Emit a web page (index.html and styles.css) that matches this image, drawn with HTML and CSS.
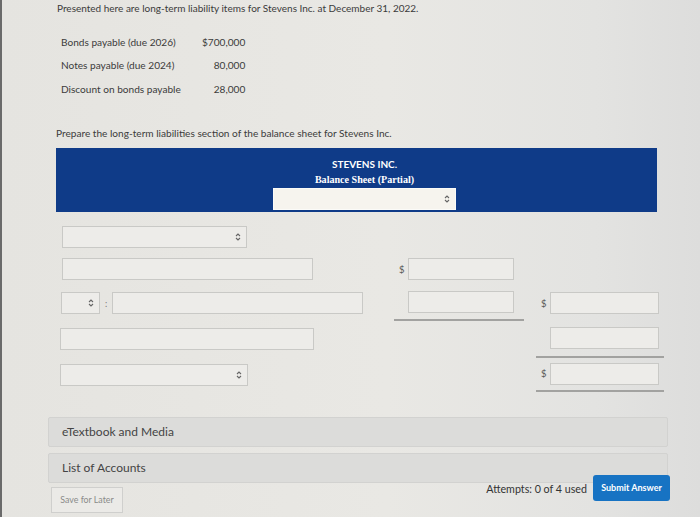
FILE: index.html
```html
<!DOCTYPE html>
<html>
<head>
<meta charset="utf-8">
<link rel="stylesheet" href="styles.css">
</head>
<body>
<div class="screen">
  <div class="content">
    <p class="intro">Presented here are long-term liability items for Stevens Inc. at December 31, 2022.</p>
    <table class="items">
      <tr><td class="lbl">Bonds payable (due 2026)</td><td class="val">$700,000</td></tr>
      <tr><td class="lbl">Notes payable (due 2024)</td><td class="val">80,000</td></tr>
      <tr><td class="lbl">Discount on bonds payable</td><td class="val">28,000</td></tr>
    </table>
    <p class="prompt">Prepare the long-term liabilities section of the balance sheet for Stevens Inc.</p>

    <div class="sheet-head">
      <div class="co">STEVENS INC.</div>
      <div class="title">Balance Sheet (Partial)</div>
      <div class="select wide-sel"><svg class="chev" viewBox="0 0 8 10"><path d="M2 4 L4 2 L6 4 M2 6 L4 8 L6 6"/></svg></div>
    </div>

    <div class="grid">
      <!-- row 1 -->
      <div class="ca"><div class="select sel-a"><svg class="chev" viewBox="0 0 8 10"><path d="M2 4 L4 2 L6 4 M2 6 L4 8 L6 6"/></svg></div></div>
      <div class="cb"></div>
      <div class="cc"></div>
      <!-- row 2 -->
      <div class="ca"><div class="input in-a"></div></div>
      <div class="cb"><span class="dol">$</span><div class="input in-b"></div></div>
      <div class="cc"></div>
      <!-- row 3 -->
      <div class="ca"><div class="select sel-s"><svg class="chev" viewBox="0 0 8 10"><path d="M2 4 L4 2 L6 4 M2 6 L4 8 L6 6"/></svg></div><span class="colon">:</span><div class="input in-c"></div></div>
      <div class="cb ul"><span class="dol"></span><div class="input in-b"></div></div>
      <div class="cc"><span class="dol">$</span><div class="input in-d"></div></div>
      <!-- row 4 -->
      <div class="ca"><div class="input in-e"></div></div>
      <div class="cb"></div>
      <div class="cc ul"><span class="dol"></span><div class="input in-d"></div></div>
      <!-- row 5 -->
      <div class="ca"><div class="select sel-b"><svg class="chev" viewBox="0 0 8 10"><path d="M2 4 L4 2 L6 4 M2 6 L4 8 L6 6"/></svg></div></div>
      <div class="cb"></div>
      <div class="cc ul"><span class="dol">$</span><div class="input in-d"></div></div>
    </div>
  </div>

  <div class="footer">
    <div class="bar">eTextbook and Media</div>
    <div class="bar">List of Accounts</div>
    <div class="actions">
      <div class="save">Save for Later</div>
      <div class="spacer"></div>
      <div class="attempts">Attempts: 0 of 4 used</div>
      <div class="submit">Submit Answer</div>
    </div>
  </div>
</div>
</body>
</html>
```
FILE: styles.css
```css
* { box-sizing: border-box; }
html, body { margin: 0; padding: 0; }
body {
  width: 700px;
  height: 517px;
  overflow: hidden;
  background: #e4e3e0;
  font-family: Lato, "Liberation Sans", sans-serif;
  color: #3b3b3b;
}
.screen {
  height: 517px;
  border-left: 2px solid #6a6a6a;
  background: linear-gradient(90deg, #e5e4e0 0%, #e9e8e4 55%, #e3e3e1 85%, #dddddc 100%);
}
.content {
  padding: 1px 0 0 55px;
}
.intro {
  margin: 0;
  font-size: 10px;
  line-height: 14px;
}
.items {
  border-collapse: collapse;
  margin: 15px 0 0 4px;
  font-size: 10.1px;
}
.items td {
  padding: 0;
  height: 23.5px;
}
.items .lbl { width: 141px; }
.items .val { width: 43px; text-align: right; }
.prompt {
  margin: 25px 0 0 -1px;
  font-size: 10.1px;
  line-height: 14px;
}
.sheet-head {
  margin: 8px 0 0 -1px;
  width: 601px;
  height: 64px;
  background: #0f3b88;
  color: #fff;
  display: flex;
  flex-direction: column;
  align-items: center;
  padding: 10px 0 0 16px;
}
.co {
  font-weight: bold;
  font-size: 10px;
  line-height: 12px;
}
.title {
  font-family: "Liberation Serif", serif;
  font-weight: bold;
  font-size: 10.1px;
  line-height: 14px;
  margin-top: 3px;
}
.select {
  display: flex;
  align-items: center;
  justify-content: flex-end;
  border: 1px solid #c9c9c6;
  background: #edece9;
  height: 22px;
  padding-right: 4px;
}
.chev {
  width: 8px;
  height: 10px;
  fill: none;
  stroke: #666;
  stroke-width: 1.1;
}
.wide-sel {
  width: 183px;
  background: #f6f4ee;
  border-color: #fbfbf8;
  margin-top: 1px;
}
.grid {
  display: grid;
  grid-template-columns: 302px 160px 140px;
  grid-template-rows: 31px 33px 35px 37px 34px;
  margin: 10px 0 0 5px;
}
.grid > div {
  display: flex;
  align-items: center;
}
.cb { margin-left: 30px; padding-left: 5px; }
.cc { margin-left: 12px; padding-left: 5px; }
.ul { border-bottom: 2px solid #a2a2a0; }
.input {
  height: 22px;
  border: 1px solid #c9c9c6;
  background: #edece9;
}
.in-a { width: 251px; }
.in-e { width: 254px; margin-left: -2px; }
.in-b { width: 106px; }
.in-c { width: 251px; }
.in-d { width: 109px; }
.sel-a { width: 185px; }
.sel-b { width: 188px; margin-left: -2px; }
.sel-s { width: 39px; margin-left: -1px; }
.colon { width: 12px; text-align: center; font-size: 9px; color: #777; }
.dol { width: 9px; font-size: 9.5px; color: #555; }
.footer {
  margin: 25px 0 0 46px;
  width: 620px;
}
.bar {
  height: 30px;
  margin-bottom: 6px;
  background: #dcdcda;
  border: 1px solid #d2d2d0;
  border-radius: 2px;
  font-size: 12px;
  line-height: 28px;
  padding-left: 13px;
  color: #444;
}
.actions {
  display: flex;
  align-items: flex-start;
  margin-top: -14px;
}
.save {
  margin-top: 12px;
  width: 72px;
  height: 26px;
  margin-left: 3px;
  border: 1px solid #cfcfcd;
  background: #ebeae7;
  font-size: 8.8px;
  color: #8a8a8a;
  display: flex;
  align-items: center;
  justify-content: center;
}
.spacer { flex: 1; }
.attempts {
  font-size: 10.7px;
  color: #333;
  margin-top: 7px;
  margin-right: 6px;
}
.submit {
  background: #1773c3;
  color: #fff;
  font-weight: bold;
  font-size: 9px;
  width: 77px;
  height: 26px;
  border-radius: 3px;
  display: flex;
  align-items: center;
  justify-content: center;
  margin-right: -2px;
}
```
